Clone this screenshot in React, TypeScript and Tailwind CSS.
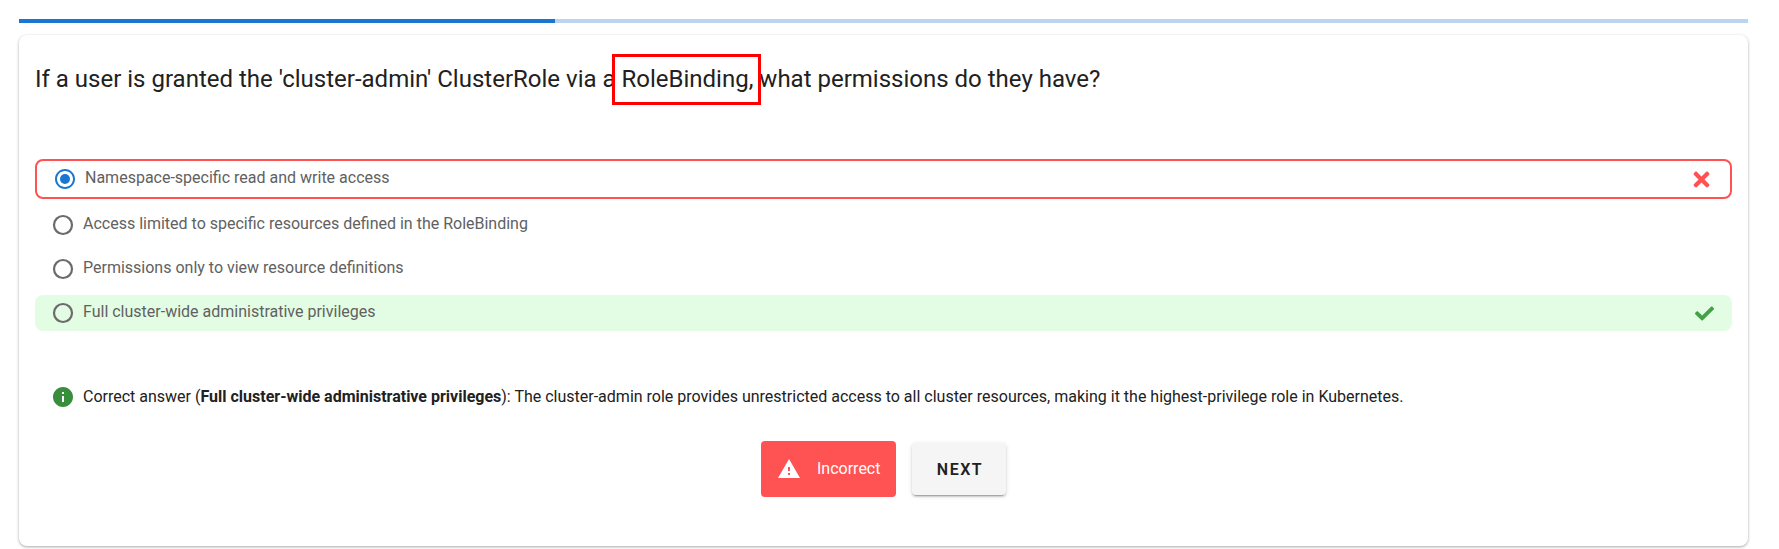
import { FaCheck, FaTimes } from "react-icons/fa";

const font = { fontFamily: "Roboto, sans-serif" };

function RadioIcon({ checked }: { checked?: boolean }) {
  return (
    <svg viewBox="0 0 24 24" className={checked ? "w-6 h-6 shrink-0 fill-[#1976d2]" : "w-6 h-6 shrink-0 fill-none stroke-[#6b6b6b]"}>
      {checked ? (
        <>
          <path d="M12 2C6.48 2 2 6.48 2 12s4.48 10 10 10 10-4.48 10-10S17.52 2 12 2zm0 18c-4.42 0-8-3.58-8-8s3.58-8 8-8 8 3.58 8 8-3.58 8-8 8z" />
          <circle cx="12" cy="12" r="5" />
        </>
      ) : (
        <circle cx="12" cy="12" r="9" strokeWidth="2.2" />
      )}
    </svg>
  );
}

export default function App() {
  return (
    <div className="h-[549px] bg-white pt-[19px] pl-[19px] pr-[31px] overflow-hidden font-['Roboto',sans-serif]" style={font}>
      <div className="h-1 bg-[#bbd4f0]">
        <div className="h-1 w-[536px] bg-[#1976d2]" />
      </div>
      <div className="relative mt-3 h-[511px] rounded-lg bg-white shadow-[0_1px_3px_rgba(0,0,0,0.35)] pt-[26px] px-[16px]">
        <h2 className="text-[24px] leading-[36px] text-[#212121] font-normal">
          If a user is granted the 'cluster-admin' ClusterRole via a{" "}
          <span className="relative">
            RoleBinding,
            <span className="absolute left-[-9px] top-[-11px] w-[149px] h-[51px] border-[3px] border-[#ff0000]" />
          </span>{" "}
          what permissions do they have?
        </h2>
        <div className="mt-[62px] flex flex-col">
          <div className="h-10 rounded-lg border-2 border-[#ff5252] flex items-center pl-[16px] pr-[17px] text-[#616161] text-[16px]">
            <RadioIcon checked />
            <span className="ml-2 -mt-[2px]">Namespace-specific read and write access</span>
            <FaTimes className="ml-auto text-[#ff5252] text-[23px]" />
          </div>
          <div className="h-11 mt-1 flex items-center pl-[16px] text-[#616161] text-[16px]">
            <RadioIcon />
            <span className="ml-2 -mt-[2px]">Access limited to specific resources defined in the RoleBinding</span>
          </div>
          <div className="h-11 flex items-center pl-[16px] text-[#616161] text-[16px]">
            <RadioIcon />
            <span className="ml-2 -mt-[2px]">Permissions only to view resource definitions</span>
          </div>
          <div className="h-9 mt-1 rounded-lg bg-[#e3fde4] flex items-center pl-[16px] pr-[18px] text-[#616161] text-[16px]">
            <RadioIcon />
            <span className="ml-2 -mt-[2px]">Full cluster-wide administrative privileges</span>
            <FaCheck className="ml-auto text-[#43a047] text-[19px]" />
          </div>
        </div>
        <div className="mt-[54px] pl-[16px] flex items-center text-[16px] text-[#212121]">
          <svg viewBox="0 0 24 24" className="w-6 h-6 shrink-0 fill-[#388e3c]">
            <path d="M12 2C6.48 2 2 6.48 2 12s4.48 10 10 10 10-4.48 10-10S17.52 2 12 2zm1 15h-2v-6h2v6zm0-8h-2V7h2v2z" />
          </svg>
          <p className="ml-2 -mt-[1px]">
            Correct answer (<b className="font-bold">Full cluster-wide administrative privileges</b>): The cluster-admin role provides unrestricted access to all cluster resources, making it the highest-privilege role in Kubernetes.
          </p>
        </div>
        <div className="mt-[32px] flex items-center justify-center gap-4">
          <div className="w-[135px] h-14 rounded bg-[#ff5252] flex items-center pl-4 text-white text-[16px]">
            <svg viewBox="0 0 24 24" className="w-6 h-6 fill-white shrink-0">
              <path d="M1 21h22L12 2 1 21zm12-3h-2v-2h2v2zm0-4h-2v-4h2v4z" />
            </svg>
            <span className="ml-4">Incorrect</span>
          </div>
          <button className="w-[94px] h-[52px] pl-[2px] pt-[1px] rounded bg-[#f5f5f5] text-[#212121] text-[16px] font-semibold tracking-[1.5px] shadow-[0_3px_1px_-2px_rgba(0,0,0,0.2),0_2px_2px_0_rgba(0,0,0,0.14),0_1px_5px_0_rgba(0,0,0,0.12)]">
            NEXT
          </button>
        </div>
      </div>
    </div>
  );
}
